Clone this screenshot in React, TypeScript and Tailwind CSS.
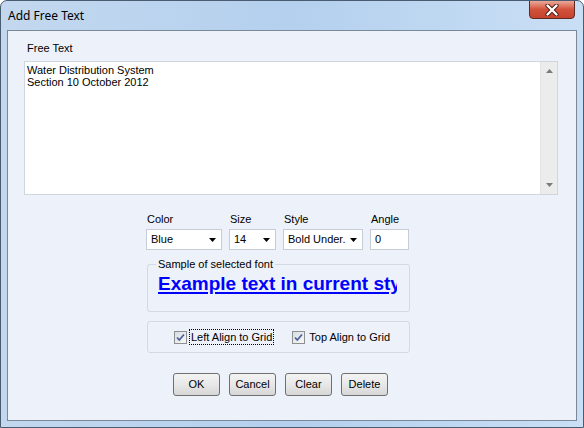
import React from 'react'

const ui = "font-['Liberation_Sans',Arial,sans-serif] text-[11px] leading-[13px] text-black"

function Arrow() {
  return (
    <svg width="7" height="4" viewBox="0 0 7 4" className="shrink-0">
      <path d="M0 0H7L3.5 4Z" fill="#000" />
    </svg>
  )
}

function Select({ value, width }: { value: string; width: string }) {
  return (
    <div className={`${width} h-[21px] flex items-center justify-between bg-white border border-[#c6cdd6] pl-[4px] pr-[5px]`}>
      <span>{value}</span>
      <Arrow />
    </div>
  )
}

function Check() {
  return (
    <div className="w-[13px] h-[13px] border border-[#8e8f8f] bg-gradient-to-br from-[#d9dde3] to-[#f7f8f9] flex items-center justify-center shrink-0">
      <svg width="11" height="11" viewBox="0 0 11 11">
        <path d="M2 5.5L4.3 8L9 2.5" fill="none" stroke="#4a5f97" strokeWidth="1.7" />
      </svg>
    </div>
  )
}

function Btn({ label }: { label: string }) {
  return (
    <div className="w-[47px] h-[23px] flex items-center justify-center rounded-[3px] border border-[#707070] bg-gradient-to-b from-[#f3f3f3] via-[#e8e8e8] to-[#d6d6d6]">
      {label}
    </div>
  )
}

export default function App() {
  return (
    <div className="w-[584px] h-[428px] flex flex-col rounded-t-[7px] border border-[#4a5c70] bg-gradient-to-r from-[#c3d8ef] via-[#b4d0ee] to-[#c9dff5] overflow-hidden">
      {/* title bar */}
      <div className="h-[29px] flex items-start justify-between pl-[7px] pr-[8px] shrink-0">
        <span className="mt-[7px] font-['Noto_Sans',sans-serif] text-[12px] leading-[16px] text-black">Add Free Text</span>
        <div className="w-[46px] h-[19px] -mt-px rounded-b-[4px] border border-[#5e2a22] bg-gradient-to-b from-[#e9a898] via-[#d2513b] to-[#c5432d] flex items-center justify-center">
          <svg width="14" height="12" viewBox="0 0 14 12">
            <path d="M2.5 1.5L11.5 10.5M11.5 1.5L2.5 10.5" stroke="#4a1a12" strokeWidth="4.2" strokeLinecap="round" />
            <path d="M2.5 1.5L11.5 10.5M11.5 1.5L2.5 10.5" stroke="#ffffff" strokeWidth="2.4" strokeLinecap="round" />
          </svg>
        </div>
      </div>

      {/* client area */}
      <div className={`${ui} mx-[6px] h-[391px] border border-[#7b8898] bg-[#edf1f9] flex flex-col shrink-0`}>
        <div className="pl-[19px] mt-[11px]">Free Text</div>

        <div className="ml-[16px] mt-[6px] w-[534px] h-[134px] bg-white border border-[#cfd6de] flex">
          <div className="flex-1 pl-[2px] pt-[2px] leading-[12px]">
            <div>Water Distribution System</div>
            <div>Section 10 October 2012</div>
          </div>
          <div className="w-[17px] h-full bg-[#ececec] border-l border-[#e2e2e2] flex flex-col items-center justify-between py-[7px]">
            <svg width="7" height="4" viewBox="0 0 7 4"><path d="M0 4H7L3.5 0Z" fill="#7a7a7a" /></svg>
            <svg width="7" height="4" viewBox="0 0 7 4"><path d="M0 0H7L3.5 4Z" fill="#7a7a7a" /></svg>
          </div>
        </div>

        <div className="pl-[138px] flex flex-col">
          {/* font controls */}
          <div className="flex gap-[7px] mt-[18px]">
            <div className="flex flex-col gap-[3px]">
              <span className="pl-px">Color</span>
              <Select value="Blue" width="w-[76px]" />
            </div>
            <div className="flex flex-col gap-[3px]">
              <span className="pl-px">Size</span>
              <Select value="14" width="w-[47px]" />
            </div>
            <div className="flex flex-col gap-[3px]">
              <span className="pl-px">Style</span>
              <Select value="Bold Under." width="w-[80px]" />
            </div>
            <div className="flex flex-col gap-[3px]">
              <span className="pl-px">Angle</span>
              <div className="w-[39px] h-[21px] bg-white border border-[#c6cdd6] pl-[4px] flex items-center">0</div>
            </div>
          </div>

          {/* sample group */}
          <div className="relative ml-px mt-[14px] w-[263px] h-[48px] border border-[#d3dae3] rounded-[3px] pt-[8px] pl-[10px]">
            <span className="absolute left-[8px] -top-[7px] px-[2px] bg-[#edf1f9]">Sample of selected font</span>
            <div className="w-[239px] overflow-hidden">
              <span className="block whitespace-nowrap font-['Liberation_Sans',Arial,sans-serif] font-bold text-[19px] leading-[22px] text-[#0000ff] underline decoration-2 underline-offset-[2px]">
                Example text in current style
              </span>
            </div>
          </div>

          {/* align group */}
          <div className="ml-px mt-[9px] w-[263px] h-[32px] border border-[#d3dae3] rounded-[3px] flex items-center pl-[26px]">
            <Check />
            <span className="ml-[2px] px-px border border-dotted border-black leading-[14px]">Left Align to Grid</span>
            <div className="ml-[18px]"><Check /></div>
            <span className="ml-[4px]">Top Align to Grid</span>
          </div>

          {/* buttons */}
          <div className="flex gap-[9px] mt-[20px] ml-[27px]">
            <Btn label="OK" />
            <Btn label="Cancel" />
            <Btn label="Clear" />
            <Btn label="Delete" />
          </div>
        </div>
      </div>
    </div>
  )
}
